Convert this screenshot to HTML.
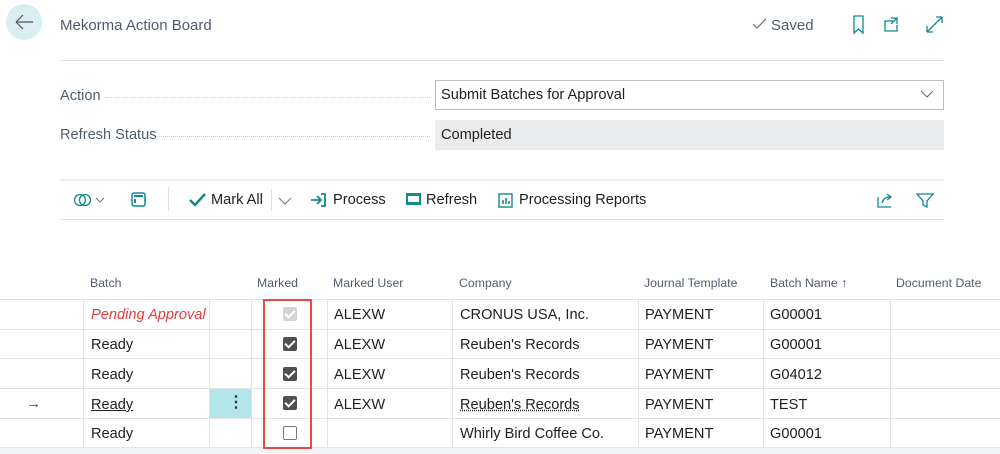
<!DOCTYPE html>
<html><head><style>
*{margin:0;padding:0;box-sizing:border-box}
body{width:1000px;height:454px;background:#fff;font-family:"Liberation Sans",sans-serif;position:relative;overflow:hidden;color:#212121}
.a{position:absolute;white-space:nowrap}
.t{font-size:14.6px}
.h{font-size:12.3px;color:#505c6d}
.hl{position:absolute;height:1px;background:#e3e3e3}
.vl{position:absolute;width:1px;background:#e3e3e3;top:299px;height:148px}
.cb{position:absolute;width:14px;height:14px;border-radius:2px;background:#505050;left:283px}
.cb:after{content:"";position:absolute;left:4px;top:1px;width:4px;height:8px;border:solid #fff;border-width:0 2px 2px 0;transform:rotate(45deg)}
</style></head><body>
<div class="a" style="left:6px;top:4px;width:36px;height:36px;border-radius:50%;background:#d8eef1"></div>
<svg class="a" style="left:13px;top:12px" width="22" height="20"><path d="M3 10H20M3 10L10 3M3 10L10 17" stroke="#4a5560" stroke-width="1.2" fill="none"/></svg>
<div class="a" style="left:60px;top:17px;font-size:15px;color:#505c6d">Mekorma Action Board</div>
<svg class="a" style="left:752px;top:17px" width="16" height="14"><path d="M1 7L5 11L14 2" stroke="#6a7380" stroke-width="1.2" fill="none"/></svg>
<div class="a" style="left:771px;top:17px;font-size:15px;color:#505c6d">Saved</div>
<svg class="a" style="left:850px;top:14px" width="100" height="22"><g stroke="#0f8a8f" stroke-width="1.3" fill="none"><path d="M4 2H13V19L8.5 15L4 19Z"/><path d="M45 7H36V17H48V11M42 4H48V10M48 4L42 10" transform="translate(-1,0)"/><path d="M67 19L82 4M82 4H76M82 4V10M67 19H73M67 19V13" transform="translate(10,-1)"/></g></svg>
<div class="hl" style="left:60px;top:60px;width:884px"></div>
<div class="a t" style="left:60px;top:88px;color:#505c6d">Action</div>
<div class="a" style="left:106px;top:97px;width:324px;border-top:1.5px dotted #ccc"></div>
<div class="a t" style="left:60px;top:127px;color:#505c6d">Refresh Status</div>
<div class="a" style="left:156px;top:136px;width:274px;border-top:1.5px dotted #ccc"></div>
<div class="a" style="left:435px;top:80px;width:509px;height:30px;border:1px solid #b9bec4"></div>
<div class="a t" style="left:441px;top:87px">Submit Batches for Approval</div>
<svg class="a" style="left:920px;top:89px" width="14" height="10"><path d="M1 2L7 8L13 2" stroke="#6a7380" stroke-width="1.1" fill="none"/></svg>
<div class="a" style="left:435px;top:120px;width:509px;height:30px;background:#eaebec"></div>
<div class="a t" style="left:441px;top:127px">Completed</div>
<div class="hl" style="left:60px;top:179px;width:884px;height:2px;background:#ececec"></div>
<div class="hl" style="left:60px;top:219px;width:884px"></div>
<svg class="a" style="left:72px;top:190px" width="40" height="20"><g stroke="#0f8a8f" stroke-width="1.3" fill="none"><circle cx="8" cy="10" r="5.5"/><circle cx="13" cy="10" r="5.5"/></g><path d="M24 8L28 12L32 8" stroke="#6a7380" fill="none"/></svg>
<svg class="a" style="left:130px;top:191px" width="18" height="18"><rect x="2" y="2" width="13" height="13" rx="2" stroke="#0f8a8f" stroke-width="1.5" fill="none"/><path d="M4 5H13M5 8V12" stroke="#0f8a8f" stroke-width="2"/></svg>
<div class="a" style="left:168px;top:187px;width:1px;height:24px;background:#ddd"></div>
<svg class="a" style="left:189px;top:193px" width="18" height="14"><path d="M1 7L6 12L16 1" stroke="#0f8a8f" stroke-width="2.5" fill="none"/></svg>
<div class="a t" style="left:211px;top:192px">Mark All</div>
<div class="a" style="left:271px;top:189px;width:1px;height:22px;background:#ddd"></div>
<svg class="a" style="left:278px;top:196px" width="14" height="10"><path d="M1 2L7 8L13 2" stroke="#6a7380" fill="none"/></svg>
<svg class="a" style="left:310px;top:192px" width="20" height="16"><path d="M1 8H11M7 4L11 8L7 12M11 2H15V14H11" stroke="#0f8a8f" stroke-width="1.8" fill="none"/></svg>
<div class="a t" style="left:333px;top:192px">Process</div>
<svg class="a" style="left:405px;top:192px" width="18" height="16"><rect x="1" y="1" width="15" height="12" fill="#0f8a8f"/><rect x="3" y="4" width="11" height="6" fill="#fff"/></svg>
<div class="a t" style="left:426px;top:192px">Refresh</div>
<svg class="a" style="left:497px;top:191px" width="18" height="18"><rect x="2" y="3" width="13" height="13" stroke="#0f8a8f" stroke-width="1.4" fill="none"/><path d="M6 13V9M9 13V7M12 13V10" stroke="#0f8a8f" stroke-width="1.6"/></svg>
<div class="a t" style="left:519px;top:192px">Processing Reports</div>
<svg class="a" style="left:876px;top:191px" width="60" height="18"><g stroke="#0f8a8f" stroke-width="1.3" fill="none"><path d="M2 6V16H15M6 12C7 8 10 6 14 6M11 3L15 6L11 9"/><path d="M41 3H57L51 10V16L47 14V10Z"/></g></svg>
<div class="a h" style="left:90px;top:276px">Batch</div>
<div class="a h" style="left:257px;top:276px">Marked</div>
<div class="a h" style="left:333px;top:276px">Marked User</div>
<div class="a h" style="left:459px;top:276px">Company</div>
<div class="a h" style="left:644px;top:276px">Journal Template</div>
<div class="a h" style="left:770px;top:276px">Batch Name ↑</div>
<div class="a h" style="left:896px;top:276px">Document Date</div>
<div class="hl" style="left:0;top:299px;width:1000px"></div>
<div class="hl" style="left:0;top:329px;width:1000px"></div>
<div class="hl" style="left:0;top:358px;width:1000px"></div>
<div class="hl" style="left:0;top:388px;width:1000px"></div>
<div class="hl" style="left:0;top:418px;width:1000px"></div>
<div class="a" style="left:0;top:447px;width:1000px;height:7px;background:#f3f4f5;border-top:1px solid #e3e3e3"></div>
<div class="vl" style="left:83px"></div><div class="vl" style="left:209px"></div><div class="vl" style="left:251px"></div><div class="vl" style="left:327px"></div><div class="vl" style="left:452px"></div><div class="vl" style="left:638px"></div><div class="vl" style="left:763px"></div><div class="vl" style="left:890px"></div>
<div class="a" style="left:210px;top:389px;width:41px;height:29px;background:#b3e6ea"></div>
<div class="a" style="left:228px;top:392px;font-size:16px;font-weight:bold;color:#333">⋮</div>
<div class="a" style="left:26px;top:395px;font-size:15px;color:#444">→</div>
<div class="a t" style="left:91px;top:307px;color:#e43c3c;font-style:italic">Pending Approval</div>
<div class="a t" style="left:91px;top:337px">Ready</div>
<div class="a t" style="left:91px;top:367px">Ready</div>
<div class="a t" style="left:91px;top:397px;text-decoration:underline">Ready</div>
<div class="a t" style="left:91px;top:426px">Ready</div>
<div class="cb" style="top:307px;background:#d4d4d4"></div>
<div class="cb" style="top:337px"></div>
<div class="cb" style="top:367px"></div>
<div class="cb" style="top:396px"></div>
<div class="a" style="left:283px;top:426px;width:14px;height:14px;border:1px solid #777;border-radius:2px"></div>
<div class="a" style="left:263px;top:299px;width:49px;height:150px;border:2px solid #e8484a"></div>
<div class="a t" style="left:334px;top:307px">ALEXW</div>
<div class="a t" style="left:334px;top:337px">ALEXW</div>
<div class="a t" style="left:334px;top:367px">ALEXW</div>
<div class="a t" style="left:334px;top:397px">ALEXW</div>
<div class="a t" style="left:460px;top:307px">CRONUS USA, Inc.</div>
<div class="a t" style="left:460px;top:337px">Reuben's Records</div>
<div class="a t" style="left:460px;top:367px">Reuben's Records</div>
<div class="a t" style="left:460px;top:397px;text-decoration:underline dotted">Reuben's Records</div>
<div class="a t" style="left:460px;top:426px">Whirly Bird Coffee Co.</div>
<div class="a t" style="left:645px;top:307px">PAYMENT</div>
<div class="a t" style="left:645px;top:337px">PAYMENT</div>
<div class="a t" style="left:645px;top:367px">PAYMENT</div>
<div class="a t" style="left:645px;top:397px">PAYMENT</div>
<div class="a t" style="left:645px;top:426px">PAYMENT</div>
<div class="a t" style="left:770px;top:307px">G00001</div>
<div class="a t" style="left:770px;top:337px">G00001</div>
<div class="a t" style="left:770px;top:367px">G04012</div>
<div class="a t" style="left:770px;top:397px">TEST</div>
<div class="a t" style="left:770px;top:426px">G00001</div>
</body></html>
